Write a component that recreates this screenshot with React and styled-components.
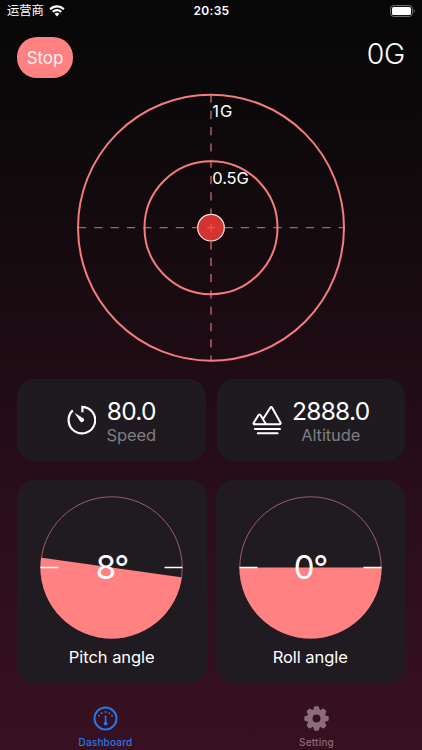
import React from "react";
import styled, { createGlobalStyle } from "styled-components";

const GlobalStyle = createGlobalStyle`
  * {
    box-sizing: border-box;
  }
  body {
    margin: 0;
    background: #080708;
    font-family: Inter, "Noto Sans CJK SC", sans-serif;
    color: #fff;
  }
`;

const WifiIcon = () => (
  <svg width="16" height="12" viewBox="0 0 16 12" fill="#fff">
    <path d="M8 .3C5 .3 2.3 1.500 .4 3.400l1.500 1.600A8.700 8.700 0 0 1 8 2.500c2.400 0 4.500.9 6.100 2.500l1.500-1.600A10.800 10.800 0 0 0 8 .3z" />
    <path d="M8 4.100c-1.900 0-3.700.8-5 2l1.500 1.600A5 5 0 0 1 8 6.200c1.400 0 2.600.6 3.500 1.500L13 6.100a7.200 7.200 0 0 0-5-2z" />
    <path d="M8 7.800c-.9 0-1.700.3-2.400.9L8 11.400l2.400-2.700A3.600 3.600 0 0 0 8 7.800z" />
  </svg>
);

const BatteryIcon = () => (
  <svg width="26" height="12" viewBox="0 0 26 12">
    <rect x=".6" y=".6" width="21.800" height="10.800" rx="3" fill="none" stroke="#777" />
    <rect x="2" y="2" width="19" height="8" rx="1.600" fill="#fff" />
    <path d="M23.700 4.200c1.300.4 1.300 3.200 0 3.600z" fill="#777" />
  </svg>
);

const SpeedIcon = () => (
  <svg width="30" height="30" viewBox="-.8 0 30 30" fill="none">
    <path
      d="M6 5.400A13.300 13.300 0 1 0 15.600 1.800V7.300"
      stroke="#fff"
      strokeWidth="2.200"
    />
    <path d="M7.600 7.800L16.800 13.500A2.200 2.200 0 1 1 13.300 16.200z" fill="#fff" />
  </svg>
);

const AltitudeIcon = () => (
  <svg
    width="30"
    height="30"
    viewBox="0 0 30 30"
    fill="none"
    stroke="#fff"
    strokeWidth="2"
    strokeLinecap="round"
    strokeLinejoin="round"
  >
    <path d="M2.500 19.300H27.300Q29.300 19.300 28.400 17.500L20.300 3Q19.200 1.200 18.100 3L11.700 13" />
    <path d="M13.700 18.800L8.600 10.200Q7.500 8.600 6.400 10.200L1.800 17.600Q1 19.300 2.500 19.300" />
    <path d="M2.900 24.100H28M5.800 28.300H25.600" />
  </svg>
);

const DashboardIcon = () => (
  <svg width="25" height="25" viewBox="0 0 25 25" fill="#2478e8">
    <circle cx="12.500" cy="12.500" r="11" fill="none" stroke="#2478e8" strokeWidth="2" />
    <rect x="11.800" y="9.500" width="1.600" height="9" rx=".8" />
    <circle cx="12.600" cy="17.600" r="1.900" />
    <circle cx="6" cy="9.800" r="1" />
    <circle cx="8.700" cy="7.200" r="1" />
    <circle cx="12.500" cy="6" r="1" />
    <circle cx="16.300" cy="7.200" r="1" />
    <circle cx="19" cy="9.800" r="1" />
  </svg>
);

const GearIcon = () => (
  <svg width="25" height="25" viewBox="-12.500 -12.500 25 25">
    <g fill="#8b6c7b">
      {[0, 45, 90, 135, 180, 225, 270, 315].map((a) => (
        <path
          key={a}
          d="M-3.300-8L-2.500-11.200Q-2.200-12.200-1.200-12.200H1.200Q2.200-12.200 2.500-11.200L3.300-8z"
          transform={`rotate(${a})`}
        />
      ))}
    </g>
    <circle r="6.700" fill="none" stroke="#8b6c7b" strokeWidth="5.400" />
  </svg>
);

const Radar = () => (
  <RadarSvg viewBox="0 0 268 268">
    <g fill="none" stroke="#f47c7e" strokeWidth="2">
      <circle cx="134" cy="133.700" r="133" />
      <circle cx="134" cy="133.700" r="66.500" />
    </g>
    <circle cx="134" cy="133.700" r="13.300" fill="#d3342f" stroke="#fbe3e0" strokeWidth="1.200" />
    <g stroke="#ff8080" strokeOpacity=".7" strokeDasharray="8.150 8.150">
      <path d="M134 .5V120.500" strokeWidth="1.500" />
      <path d="M134 147V267" strokeWidth="1.500" strokeDashoffset="-.5" />
      <path d="M1 133.600H121" strokeWidth="1.200" />
      <path d="M147 133.600H267" strokeWidth="1.200" strokeDashoffset="-.5" />
    </g>
    <path d="M130 133.600h8M134 129.600v8" stroke="#ff5350" />
    <RadarLabel x="135.300" y="23" textLength="20">
      1G
    </RadarLabel>
    <RadarLabel x="135.300" y="89.500" textLength="36.500">
      0.5G
    </RadarLabel>
  </RadarSvg>
);

const Metric = ({ icon, value, label }) => (
  <MetricCard>
    {icon}
    <MetricText>
      <MetricValue>{value}</MetricValue>
      <MetricLabel>{label}</MetricLabel>
    </MetricText>
  </MetricCard>
);

const AngleDial = ({ id, angle, label }) => (
  <AngleCard>
    <Dial>
      <svg width="143" height="143" viewBox="-71.500 -71.500 143 143">
        <clipPath id={id}>
          <circle r="71" />
        </clipPath>
        <circle r="70.700" fill="none" stroke="#b0626a" strokeWidth=".9" />
        <g clipPath={`url(#${id})`}>
          <rect
            x="-80"
            y="0"
            width="160"
            height="90"
            fill="#ff8182"
            transform={`rotate(${angle})`}
          />
        </g>
        <path d="M-71 0H-53M53 0H71" stroke="#fff" strokeWidth="1.400" />
      </svg>
      <DialValue>{angle}°</DialValue>
    </Dial>
    <AngleLabel>{label}</AngleLabel>
  </AngleCard>
);

export default function App() {
  return (
    <>
      <GlobalStyle />
      <Screen>
        <StatusBar>
          <Carrier>
            运营商
            <WifiIcon />
          </Carrier>
          <Clock>20:35</Clock>
          <BatteryIcon />
        </StatusBar>
        <Header>
          <StopButton>Stop</StopButton>
          <Force>0G</Force>
        </Header>
        <Radar />
        <Metrics>
          <Metric icon={<SpeedIcon />} value="80.0" label="Speed" />
          <Metric icon={<AltitudeIcon />} value="2888.0" label="Altitude" />
        </Metrics>
        <Angles>
          <AngleDial id="pitch" angle={8} label="Pitch angle" />
          <AngleDial id="roll" angle={0} label="Roll angle" />
        </Angles>
        <TabBar>
          <Tab $active>
            <DashboardIcon />
            Dashboard
          </Tab>
          <Tab>
            <GearIcon />
            Setting
          </Tab>
        </TabBar>
      </Screen>
    </>
  );
}

const Screen = styled.div`
  width: 422px;
  height: 750px;
  overflow: hidden;
  display: flex;
  flex-direction: column;
  background: linear-gradient(#080708 0, #0b090a 100px, #1f0c14 370px, #2a0e1a 500px, #35101f 690px, #371121 750px);
`;
const StatusBar = styled.div`
  height: 22px;
  padding: 0 6px 0 7px;
  display: grid;
  grid-template-columns: 1fr auto 1fr;
  grid-template-rows: 22px;
  align-items: center;
  svg:last-child {
    justify-self: end;
  }
`;
const Carrier = styled.div`
  display: flex;
  align-items: center;
  gap: 5px;
  font-size: 12.3px;
  line-height: 22px;
`;
const Clock = styled.div`
  font-size: 12px;
  line-height: 22px;
  font-weight: 600;
  letter-spacing: 0.3px;
`;
const Header = styled.div`
  display: flex;
  justify-content: space-between;
  height: 72px;
  padding: 15px 17px 0;
`;
const StopButton = styled.button`
  width: 56px;
  height: 41px;
  padding: 0;
  border: none;
  border-radius: 20px;
  background: #ff8182;
  color: #fff3f3;
  font: 400 17px Inter, sans-serif;
  letter-spacing: -0.1px;
`;
const Force = styled.div`
  font-size: 28.5px;
  font-weight: 300;
  line-height: 34px;
  letter-spacing: -0.3px;
`;
const RadarSvg = styled.svg`
  width: 268px;
  height: 268px;
  align-self: center;
  flex: none;
  overflow: visible;
`;
const RadarLabel = styled.text`
  font-size: 16.5px;
  fill: #fff;
`;
const Metrics = styled.div`
  display: grid;
  grid-template-columns: 1fr 1fr;
  gap: 11px;
  padding: 0 17px;
  margin-top: 17px;
`;
const MetricCard = styled.div`
  height: 82px;
  display: flex;
  align-items: center;
  justify-content: center;
  gap: 10px;
  border-radius: 18px;
  background: #1e1a20;
`;
const MetricText = styled.div`
  display: flex;
  flex-direction: column;
  align-items: center;
  padding-top: 3px;
`;
const MetricValue = styled.div`
  font-size: 24.5px;
  line-height: 28px;
  font-weight: 400;
  letter-spacing: -0.7px;
`;
const MetricLabel = styled.div`
  margin-top: -1px;
  font-size: 16.5px;
  line-height: 22px;
  letter-spacing: -0.1px;
  color: #807d82;
`;
const Angles = styled.div`
  display: grid;
  grid-template-columns: 1fr 1fr;
  gap: 9px;
  padding: 0 17px;
  margin-top: 19px;
`;
const AngleCard = styled.div`
  height: 203px;
  padding-top: 15.5px;
  display: flex;
  flex-direction: column;
  align-items: center;
  border-radius: 18px;
  background: #1f1b21;
`;
const Dial = styled.div`
  display: grid;
  place-items: center;
  > * {
    grid-area: 1 / 1;
  }
`;
const DialValue = styled.div`
  font-size: 33px;
  font-weight: 400;
  line-height: 40px;
  letter-spacing: -1.4px;
`;
const AngleLabel = styled.div`
  margin-top: 7px;
  font-size: 16.5px;
  line-height: 22px;
  letter-spacing: -0.05px;
`;
const TabBar = styled.div`
  display: grid;
  grid-template-columns: 1fr 1fr;
  margin-top: 23px;
`;
const Tab = styled.div`
  display: flex;
  flex-direction: column;
  align-items: center;
  gap: 4px;
  font-size: 10px;
  line-height: 14px;
  font-weight: 500;
  letter-spacing: 0.2px;
  color: ${(props) => (props.$active ? "#2478e8" : "#8b6c7b")};
`;
